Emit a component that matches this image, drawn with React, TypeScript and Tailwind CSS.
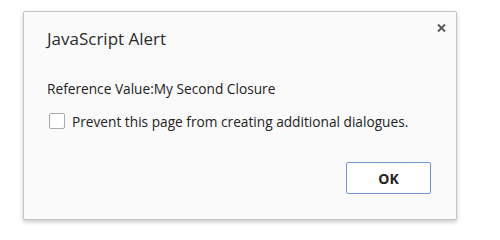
export default function App() {
  return (
    <div
      className="h-[240px] w-[500px] bg-white pl-[23px] pt-[11px]"
      style={{ fontFamily: '"Open Sans", "Noto Sans", sans-serif' }}
    >
      <div className="relative flex h-[209px] w-[434px] flex-col rounded-[2px] border border-[#c4c4c4] bg-[#fafafa] shadow-[0_2px_4px_rgba(0,0,0,0.22)]">
        <button
          type="button"
          className="absolute right-[10px] top-[12px] flex h-[8px] w-[9px] items-center justify-center"
        >
          <svg viewBox="0 0 9 8" className="h-[8px] w-[9px]">
            <path d="M1 0.5 L8 7.5 M8 0.5 L1 7.5" stroke="#595959" strokeWidth="2" />
          </svg>
        </button>
        <h1 className="ml-[23px] mt-[15px] text-[17px] leading-[24px] text-[#2a2a2a]">
          JavaScript Alert
        </h1>
        <p className="ml-[23px] mt-[29px] text-[13.7px] leading-[18px] text-[#222]">
          Reference Value:My Second Closure
        </p>
        <label className="ml-[25px] mt-[15px] flex items-start gap-[7px] text-[13.7px] leading-[18px] text-[#222]">
          <span className="h-[16px] w-[16px] shrink-0 rounded-[2px] border border-[#a9a9a9] bg-white" />
          Prevent this page from creating additional dialogues.
        </label>
        <div className="mb-[25px] mt-auto flex justify-end pr-[25px]">
          <button
            type="button"
            className="h-[32px] w-[85px] rounded-[2px] border border-[#6f98d2] bg-white text-[14px] font-bold text-[#222]"
          >
            OK
          </button>
        </div>
      </div>
    </div>
  );
}
